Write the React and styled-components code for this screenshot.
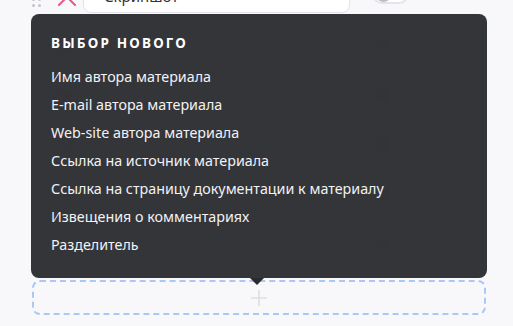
import React from "react";
import styled, { createGlobalStyle } from "styled-components";

const Global = createGlobalStyle`
  html, body { margin: 0; padding: 0; background: #f8f8fb; overflow: hidden; }
  body { font-family: "Noto Sans", "Open Sans", sans-serif; }
  * { box-sizing: border-box; }
`;

const Page = styled.div`
  position: relative;
  width: 513px;
  height: 326px;
  overflow: hidden;
  padding: 0 26px 0 32px;
`;

const List = styled.div`
  display: flex;
  flex-direction: column;
  gap: 12px;
  margin-top: -25px;
`;

const Row = styled.div`
  display: flex;
  align-items: center;
  height: 38px;
`;

const Handle = styled.div`
  width: 10px;
  display: grid;
  grid-template-columns: 3px 3px;
  gap: 3px 3px;
  margin-right: 15px;
  align-self: flex-end;
  margin-bottom: 6px;
  span { width: 3px; height: 3px; border-radius: 50%; background: #c4c4cc; }
`;

const Remove = styled.div`
  width: 20px;
  height: 20px;
  margin-right: 6px;
  align-self: flex-end;
  margin-bottom: 6px;
  display: flex;
  align-items: center;
  justify-content: center;
`;

const Field = styled.div`
  width: 267px;
  height: 38px;
  background: #fff;
  border: 1px solid #e2e2e8;
  border-radius: 8px;
  display: flex;
  align-items: flex-end;
  padding: 0 0 6px 20px;
  font-size: 15px;
  line-height: 20px;
  color: #333;
  white-space: nowrap;
  overflow: hidden;
`;

const Toggle = styled.div`
  margin-left: 22px;
  width: 37px;
  height: 20px;
  border: 2px solid #e4e4ea;
  border-radius: 10px;
  background: #fff;
  display: flex;
  align-items: center;
  padding-left: 2px;
  span { width: 15px; height: 15px; border-radius: 50%; background: #bdbdc4; }
`;

const AddBox = styled.div`
  margin-top: 17px;
  width: 454px;
  height: 35px;
  border: 2px dashed #a9c8f2;
  border-radius: 8px;
  display: flex;
  align-items: center;
  justify-content: center;
`;

const Popup = styled.div`
  position: absolute;
  left: 31px;
  top: 14px;
  width: 456px;
  height: 264px;
  background: rgba(49, 50, 54, 0.985);
  border-radius: 8px;
  padding: 20px 20px 0 20px;
  color: #f4f4f6;
  &::after {
    content: "";
    position: absolute;
    left: 219px;
    bottom: -7px;
    border-left: 7px solid transparent;
    border-right: 7px solid transparent;
    border-top: 7px solid #2a2b2f;
  }
`;

const Title = styled.div`
  font-size: 13.5px;
  font-weight: 700;
  letter-spacing: 2.2px;
  line-height: 18px;
  margin-bottom: 11px;
  color: #fff;
`;

const Item = styled.div`
  font-size: 14.3px;
  line-height: 28px;
  color: #f2f2f4;
  white-space: nowrap;
`;

const Cross = ({ color }) => (
  <svg width="20" height="20" viewBox="0 0 20 20">
    <path d="M2 2 L18 18 M18 2 L2 18" stroke={color} strokeWidth="2" strokeLinecap="round" />
  </svg>
);

const rows = ["Скриншот", "", "", "", "", ""];

const items = [
  "Имя автора материала",
  "E-mail автора материала",
  "Web-site автора материала",
  "Ссылка на источник материала",
  "Ссылка на страницу документации к материалу",
  "Извещения о комментариях",
  "Разделитель",
];

export default function App() {
  return (
    <>
      <Global />
      <Page>
        <List>
          {rows.map((r, i) => (
            <Row key={i}>
              <Handle>
                {Array.from({ length: 6 }).map((_, k) => <span key={k} />)}
              </Handle>
              <Remove>
                <Cross color="#e8568a" />
              </Remove>
              <Field>{r}</Field>
              <Toggle><span /></Toggle>
            </Row>
          ))}
        </List>
        <AddBox>
          <svg width="18" height="18" viewBox="0 0 18 18">
            <path d="M9 1 V17 M1 9 H17" stroke="#dedee2" strokeWidth="1.6" />
          </svg>
        </AddBox>
        <Popup>
          <Title>ВЫБОР НОВОГО</Title>
          {items.map((t) => <Item key={t}>{t}</Item>)}
        </Popup>
      </Page>
    </>
  );
}
